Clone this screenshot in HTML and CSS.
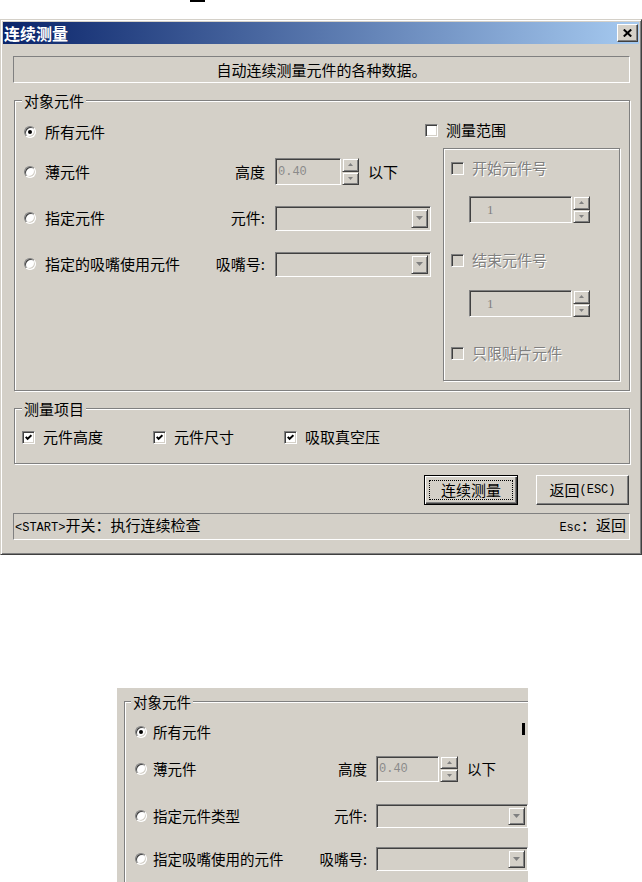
FILE: index.html
```html
<!DOCTYPE html>
<html lang="zh-CN">
<head>
<meta charset="utf-8">
<title>连续测量</title>
<link rel="stylesheet" href="styles.css">
</head>
<body>
<div class="page">
  <div class="mark"></div>

  <div class="dialog">
    <div class="titlebar">
      <span class="title">连续测量</span>
      <span class="close"><svg width="9" height="8" viewBox="0 0 9 8"><path d="M0.8 0.5 L8.2 7.5 M8.2 0.5 L0.8 7.5" stroke="#000" stroke-width="2"/></svg></span>
    </div>
    <div class="dbody">
      <div class="info">自动连续测量元件的各种数据。</div>

      <div class="grp grp-target">
        <div class="legend">对象元件</div>
        <div class="cols">
          <div class="leftcol">
            <div class="row r1">
              <div class="opt"><span class="radio on"></span>所有元件</div>
            </div>
            <div class="row r2">
              <div class="opt"><span class="radio"></span>薄元件</div>
              <div class="lbl">高度</div>
              <div class="ctl">
                <span class="edit e-height"><span class="mono dis-val">0.40</span></span>
                <span class="spin">
                  <span class="sb"><svg width="5" height="3" viewBox="0 0 5 3"><path d="M2.5 0 L5 3 L0 3 Z" fill="#808080"/></svg></span>
                  <span class="sb"><svg width="5" height="3" viewBox="0 0 5 3"><path d="M0 0 L5 0 L2.5 3 Z" fill="#808080"/></svg></span>
                </span>
                <span class="after">以下</span>
              </div>
            </div>
            <div class="row r3">
              <div class="opt"><span class="radio"></span>指定元件</div>
              <div class="lbl">元件:</div>
              <div class="ctl">
                <span class="edit combo"><span class="ddb"><svg width="7" height="4" viewBox="0 0 7 4"><path d="M0 0 L7 0 L3.5 4 Z" fill="#808080"/></svg></span></span>
              </div>
            </div>
            <div class="row r4">
              <div class="opt"><span class="radio"></span>指定的吸嘴使用元件</div>
              <div class="lbl">吸嘴号:</div>
              <div class="ctl">
                <span class="edit combo"><span class="ddb"><svg width="7" height="4" viewBox="0 0 7 4"><path d="M0 0 L7 0 L3.5 4 Z" fill="#808080"/></svg></span></span>
              </div>
            </div>
          </div>

          <div class="rightcol">
            <div class="cbrow"><span class="cb"></span>测量范围</div>
            <div class="subgrp">
              <div class="cbrow dis c1"><span class="cb dis"></span>开始元件号</div>
              <div class="spinrow s1">
                <span class="edit e-num"><span class="numval">1</span></span>
                <span class="spin">
                  <span class="sb"><svg width="5" height="3" viewBox="0 0 5 3"><path d="M2.5 0 L5 3 L0 3 Z" fill="#808080"/></svg></span>
                  <span class="sb"><svg width="5" height="3" viewBox="0 0 5 3"><path d="M0 0 L5 0 L2.5 3 Z" fill="#808080"/></svg></span>
                </span>
              </div>
              <div class="cbrow dis c2"><span class="cb dis"></span>结束元件号</div>
              <div class="spinrow s2">
                <span class="edit e-num"><span class="numval">1</span></span>
                <span class="spin">
                  <span class="sb"><svg width="5" height="3" viewBox="0 0 5 3"><path d="M2.5 0 L5 3 L0 3 Z" fill="#808080"/></svg></span>
                  <span class="sb"><svg width="5" height="3" viewBox="0 0 5 3"><path d="M0 0 L5 0 L2.5 3 Z" fill="#808080"/></svg></span>
                </span>
              </div>
              <div class="cbrow dis c3"><span class="cb dis"></span>只限贴片元件</div>
            </div>
          </div>
        </div>
      </div>

      <div class="grp grp-items">
        <div class="legend">测量项目</div>
        <div class="items">
          <div class="cbrow"><span class="cb"><svg width="7" height="7" viewBox="0 0 7 7"><path d="M0.7 2.8 L2.6 4.9 L6.4 1.1" stroke="#000" stroke-width="2" fill="none"/></svg></span>元件高度</div>
          <div class="cbrow"><span class="cb"><svg width="7" height="7" viewBox="0 0 7 7"><path d="M0.7 2.8 L2.6 4.9 L6.4 1.1" stroke="#000" stroke-width="2" fill="none"/></svg></span>元件尺寸</div>
          <div class="cbrow"><span class="cb"><svg width="7" height="7" viewBox="0 0 7 7"><path d="M0.7 2.8 L2.6 4.9 L6.4 1.1" stroke="#000" stroke-width="2" fill="none"/></svg></span>吸取真空压</div>
        </div>
      </div>

      <div class="btnrow">
        <div class="btn def"><span class="focus">连续测量</span></div>
        <div class="btn back">返回<span class="mono">(ESC)</span></div>
      </div>

      <div class="status">
        <span><span class="mono">&lt;START&gt;</span>开关：执行连续检查</span>
        <span><span class="mono">Esc</span>：返回</span>
      </div>
    </div>
  </div>

  <div class="crop">
    <div class="grp grp-crop">
      <div class="legend">对象元件</div>
      <div class="cols">
        <div class="leftcol lc2">
          <div class="row r1">
            <div class="opt"><span class="radio on"></span>所有元件</div>
          </div>
          <div class="row r2">
            <div class="opt"><span class="radio"></span>薄元件</div>
            <div class="lbl">高度</div>
            <div class="ctl">
              <span class="edit e-height2"><span class="mono dis-val">0.40</span></span>
              <span class="spin sp2">
                <span class="sb"><svg width="5" height="3" viewBox="0 0 5 3"><path d="M2.5 0 L5 3 L0 3 Z" fill="#808080"/></svg></span>
                <span class="sb"><svg width="5" height="3" viewBox="0 0 5 3"><path d="M0 0 L5 0 L2.5 3 Z" fill="#808080"/></svg></span>
              </span>
              <span class="after">以下</span>
            </div>
          </div>
          <div class="row r3">
            <div class="opt"><span class="radio"></span>指定元件类型</div>
            <div class="lbl">元件:</div>
            <div class="ctl">
              <span class="edit combo combo2"><span class="ddb"><svg width="7" height="4" viewBox="0 0 7 4"><path d="M0 0 L7 0 L3.5 4 Z" fill="#808080"/></svg></span></span>
            </div>
          </div>
          <div class="row r4">
            <div class="opt"><span class="radio"></span>指定吸嘴使用的元件</div>
            <div class="lbl">吸嘴号:</div>
            <div class="ctl">
              <span class="edit combo combo2"><span class="ddb"><svg width="7" height="4" viewBox="0 0 7 4"><path d="M0 0 L7 0 L3.5 4 Z" fill="#808080"/></svg></span></span>
            </div>
          </div>
        </div>
        <div class="rc2"><span class="cut"></span></div>
      </div>
    </div>
  </div>
</div>
</body>
</html>
```

FILE: styles.css
```css
* { box-sizing: border-box; }
html, body { margin: 0; padding: 0; background: #fff; }
body {
  font-family: "Noto Sans CJK SC", "Liberation Sans", sans-serif;
  font-size: 15px;
  line-height: 20px;
  color: #000;
}
.page { width: 642px; height: 882px; overflow: hidden; }
.mark { margin-left: 190px; width: 15px; height: 2px; background: #000; }

.mono { font-family: "Liberation Mono", monospace; font-size: 12px; }

/* window */
.dialog {
  margin-top: 17px;
  width: 642px;
  height: 536px;
  background: #d4d0c8;
  border: 1px solid;
  border-color: #d4d0c8 #404040 #404040 #d4d0c8;
  box-shadow: inset 1px 1px 0 #fff, inset -1px -1px 0 #808080;
  padding: 2px;
}
.titlebar {
  height: 22px;
  background: linear-gradient(to right, #0a246a, #a6caf0);
  display: flex;
  align-items: center;
  justify-content: space-between;
  padding: 0 1px 0 1px;
}
.title { color: #fff; font-weight: bold; font-size: 16px; line-height: 22px; }
.close {
  width: 21px; height: 18px;
  background: #d4d0c8;
  border: 1px solid;
  border-color: #fff #404040 #404040 #fff;
  box-shadow: inset -1px -1px 0 #808080;
  display: flex; align-items: center; justify-content: center;
}
.dbody { padding: 0 9px 0 10px; }

.info {
  margin-top: 12px;
  height: 27px;
  border: 1px solid;
  border-color: #808080 #fff #fff #808080;
  display: flex; align-items: center; justify-content: center;
}

/* group boxes */
.grp {
  border: 1px solid #808080;
  box-shadow: inset 1px 1px 0 #fff, 1px 1px 0 #fff;
}
.legend {
  display: block;
  width: max-content;
  height: 20px;
  margin: -10px 0 0 7px;
  padding: 0 2px;
  background: #d4d0c8;
}
.grp-target { margin: 17px 0 0 1px; height: 291px; }
.grp-items { margin: 17px 0 0 1px; height: 56px; }

.cols { display: flex; }
.leftcol { width: 410px; padding: 8px 0 0 9px; }
.row {
  height: 26px;
  display: grid;
  grid-template-columns: 178px 53px auto;
  column-gap: 10px;
  align-items: center;
}
.r2 { margin-top: 13px; }
.r3 { margin-top: 21px; }
.r4 { margin-top: 20px; }
.opt { display: flex; align-items: center; gap: 9px; white-space: nowrap; }
.lbl { text-align: right; white-space: nowrap; }
.ctl { display: flex; align-items: center; }
.after { margin-left: 9px; }

.radio {
  width: 12px; height: 12px;
  border-radius: 50%;
  background: #fff;
  border: 1px solid;
  border-color: #808080 #fff #fff #808080;
  box-shadow: inset 1px 1px 0 #404040, inset -1px -1px 0 #d4d0c8;
  display: flex; align-items: center; justify-content: center;
  flex: none;
}
.radio.on::after { content: ""; width: 4px; height: 4px; border-radius: 50%; background: #000; }

.cb {
  width: 13px; height: 13px;
  background: #fff;
  border: 1px solid;
  border-color: #808080 #fff #fff #808080;
  box-shadow: inset 1px 1px 0 #404040, inset -1px -1px 0 #d4d0c8;
  display: flex; align-items: center; justify-content: center;
  flex: none;
}
.cb.dis { background: #d4d0c8; }

.edit {
  display: flex;
  align-items: center;
  height: 27px;
  border: 1px solid;
  border-color: #808080 #fff #fff #808080;
  box-shadow: inset 1px 1px 0 #404040, inset -1px -1px 0 #d4d0c8;
  background: #d4d0c8;
}
.e-height { width: 66px; padding-left: 2px; }
.dis-val { color: #8a8a8a; }
.spin { display: flex; flex-direction: column; width: 17px; height: 27px; margin-left: 1px; }
.sb {
  flex: 1;
  background: #d4d0c8;
  border: 1px solid;
  border-color: #d4d0c8 #404040 #404040 #d4d0c8;
  box-shadow: inset 1px 1px 0 #fff, inset -1px -1px 0 #808080;
  display: flex; align-items: center; justify-content: center;
}
.combo { width: 156px; height: 25px; justify-content: flex-end; padding: 2px; }
.ddb {
  width: 17px; height: 100%;
  background: #d4d0c8;
  border: 1px solid;
  border-color: #d4d0c8 #404040 #404040 #d4d0c8;
  box-shadow: inset 1px 1px 0 #fff, inset -1px -1px 0 #808080;
  display: flex; align-items: center; justify-content: center;
}

/* right column */
.rightcol { width: 195px; padding-top: 9px; }
.cbrow { height: 20px; display: flex; align-items: center; gap: 8px; white-space: nowrap; }
.cbrow.dis { color: #808080; text-shadow: 1px 1px 0 #fff; }
.subgrp {
  margin: 8px 0 0 18px;
  width: 177px;
  height: 233px;
  border: 1px solid #808080;
  box-shadow: inset 1px 1px 0 #fff, 1px 1px 0 #fff;
  padding-left: 7px;
}
.c1 { margin-top: 9px; }
.c2 { margin-top: 27px; }
.c3 { margin-top: 26px; }
.spinrow { display: flex; margin-left: 18px; height: 27px; }
.s1 { margin-top: 18px; }
.s2 { margin-top: 20px; }
.e-num { width: 103px; padding-left: 17px; }
.numval { font-family: "Liberation Serif", serif; font-size: 13px; color: #808080; }

/* measure items */
.items {
  display: grid;
  grid-template-columns: 131px 131px auto;
  padding: 8px 0 0 7px;
}

/* buttons */
.btnrow { margin-top: 11px; display: flex; justify-content: flex-end; gap: 18px; padding-right: 1px; }
.btn {
  height: 30px;
  display: flex; align-items: center; justify-content: center;
  background: #d4d0c8;
  border: 1px solid;
  border-color: #fff #404040 #404040 #fff;
  box-shadow: inset -1px -1px 0 #808080, inset 1px 1px 0 #d4d0c8;
}
.btn.def {
  width: 94px;
  border: 1px solid #000;
  box-shadow: inset 1px 1px 0 #fff, inset -1px -1px 0 #404040, inset -2px -2px 0 #808080;
}
.btn.back { width: 93px; }
.focus {
  width: 84px; height: 20px;
  border: 1px dotted #000;
  display: flex; align-items: center; justify-content: center;
}

.status {
  margin-top: 8px;
  height: 27px;
  border: 1px solid;
  border-color: #808080 #fff #fff #808080;
  display: flex; align-items: center; justify-content: space-between;
  padding: 0 3px 0 1px;
  white-space: nowrap;
}

/* second cropped picture */
.crop {
  margin: 133px 0 0 117px;
  width: 411px;
  height: 194px;
  overflow: hidden;
  background: #d4d0c8;
  font-size: 14.5px;
}
.grp-crop { margin: 13px 0 0 7px; width: 520px; height: 260px; }
.grp-crop .legend { margin-left: 6px; }
.lc2 { width: 397px; padding: 7px 0 0 10px; }
.lc2 .row { grid-template-columns: 170px 53px auto; column-gap: 9px; }
.lc2 .opt { gap: 6px; }
.lc2 .r2 { margin-top: 11px; }
.lc2 .r3 { margin-top: 21px; }
.lc2 .r4 { margin-top: 17px; }
.e-height2 { width: 63px; height: 26px; padding-left: 2px; }
.sp2 { height: 26px; width: 18px; margin-left: 1px; }
.combo2 { width: 152px; height: 24px; }
.rc2 { padding-top: 11px; }
.cut { display: block; width: 3px; height: 12px; background: #000; }
```
